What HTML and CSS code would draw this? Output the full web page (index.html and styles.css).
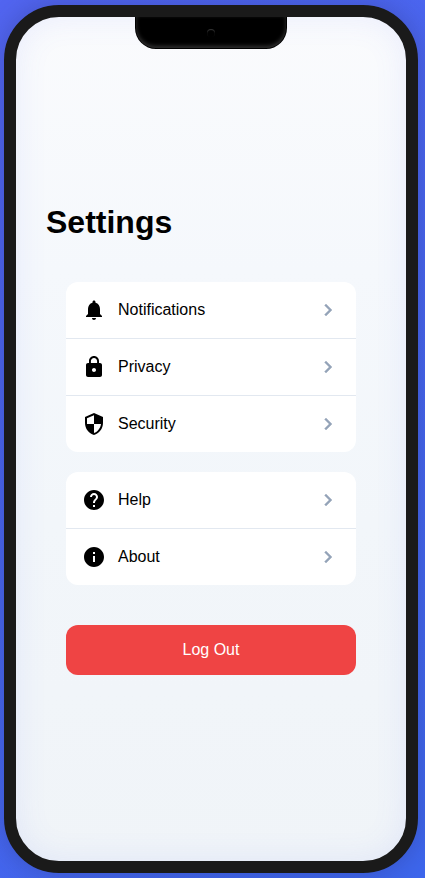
FILE: index.html
```html
<!DOCTYPE html>
<html lang="en">
<head>
<meta charset="utf-8">
<title>Settings</title>
<link rel="stylesheet" href="styles.css">
</head>
<body>
<div class="phone">
  <div class="notch"><span class="camera"></span></div>
  <main class="screen">
    <h1>Settings</h1>
    <section class="group">
      <div class="row">
        <svg class="icon" viewBox="0 0 24 24"><path d="M12 22c1.1 0 2-.9 2-2h-4c0 1.1.89 2 2 2zm6-6v-5c0-3.07-1.64-5.64-4.5-6.32V4c0-.83-.67-1.5-1.5-1.5s-1.5.67-1.5 1.5v.68C7.63 5.36 6 7.92 6 11v5l-2 2v1h16v-1l-2-2z"/></svg>
        <span class="label">Notifications</span>
        <svg class="chevron" viewBox="0 0 24 24"><path d="M10 6 8.59 7.41 13.17 12l-4.58 4.59L10 18l6-6z"/></svg>
      </div>
      <div class="row">
        <svg class="icon" viewBox="0 0 24 24"><path d="M18 8h-1V6c0-2.76-2.24-5-5-5S7 3.240 7 6v2H6c-1.100 0-2 .9-2 2v10c0 1.100.9 2 2 2h12c1.100 0 2-.9 2-2V10c0-1.100-.9-2-2-2zm-6 9c-1.100 0-2-.9-2-2s.9-2 2-2 2 .9 2 2-.9 2-2 2zm3.100-9H8.900V6c0-1.710 1.390-3.100 3.100-3.100s3.100 1.390 3.100 3.100v2z"/></svg>
        <span class="label">Privacy</span>
        <svg class="chevron" viewBox="0 0 24 24"><path d="M10 6 8.59 7.41 13.17 12l-4.58 4.59L10 18l6-6z"/></svg>
      </div>
      <div class="row">
        <svg class="icon" viewBox="0 0 24 24"><path d="M12 1 3 5v6c0 5.550 3.840 10.740 9 12 5.160-1.260 9-6.450 9-12V5l-9-4zm0 10.990h7c-.53 4.120-3.280 7.790-7 8.940V12H5V6.300l7-3.110v8.800z"/></svg>
        <span class="label">Security</span>
        <svg class="chevron" viewBox="0 0 24 24"><path d="M10 6 8.59 7.41 13.17 12l-4.58 4.59L10 18l6-6z"/></svg>
      </div>
    </section>
    <section class="group">
      <div class="row">
        <svg class="icon" viewBox="0 0 24 24"><path d="M12 2C6.480 2 2 6.480 2 12s4.480 10 10 10 10-4.480 10-10S17.520 2 12 2zm1 17h-2v-2h2v2zm2.070-7.750-.9.920C13.450 12.900 13 13.500 13 15h-2v-.5c0-1.100.45-2.100 1.170-2.830l1.240-1.260c.37-.36.590-.86.590-1.410 0-1.100-.9-2-2-2s-2 .9-2 2H8c0-2.210 1.790-4 4-4s4 1.790 4 4c0 .88-.36 1.680-.93 2.250z"/></svg>
        <span class="label">Help</span>
        <svg class="chevron" viewBox="0 0 24 24"><path d="M10 6 8.59 7.41 13.17 12l-4.58 4.59L10 18l6-6z"/></svg>
      </div>
      <div class="row">
        <svg class="icon" viewBox="0 0 24 24"><path d="M12 2C6.480 2 2 6.480 2 12s4.480 10 10 10 10-4.480 10-10S17.520 2 12 2zm1 15h-2v-6h2v6zm0-8h-2V7h2v2z"/></svg>
        <span class="label">About</span>
        <svg class="chevron" viewBox="0 0 24 24"><path d="M10 6 8.59 7.41 13.17 12l-4.58 4.59L10 18l6-6z"/></svg>
      </div>
    </section>
    <button class="logout">Log Out</button>
  </main>
</div>
</body>
</html>
```
FILE: styles.css
```css
* { box-sizing: border-box; }
body {
  margin: 0;
  height: 878px;
  padding: 5px 7px 5px 4px;
  overflow: hidden;
  font-family: "Liberation Sans", Arial, sans-serif;
  background: linear-gradient(135deg, #5265f0, #3d66ec);
}
.phone {
  position: relative;
  width: 414px;
  height: 868px;
  border: 12px solid #1a1a1a;
  border-radius: 55px;
  background: linear-gradient(180deg, #fafbfd, #f5f8fc 30%, #f2f6fa 60%, #f0f4f8);
  box-shadow: 0 0 24px 2px rgba(40, 50, 120, .32);
}
.notch {
  position: absolute;
  z-index: 1;
  top: 0;
  left: 50%;
  width: 150px;
  height: 31px;
  margin-left: -75px;
  border-radius: 0 0 20px 20px;
  background: #000;
  box-shadow: 0 0 0 1px #000, inset 0 -2px 4px rgba(255, 255, 255, .2);
  clip-path: inset(0 -1px -1px -1px);
}
.camera {
  position: absolute;
  top: 12px;
  left: 71px;
  width: 8px;
  height: 8px;
  border-radius: 50%;
  box-shadow: inset 0 1px 1px rgba(255, 255, 255, .22);
}
.screen {
  display: flex;
  flex-direction: column;
  height: 844px;
  padding: 187px 50px 0;
  border-radius: 43px;
  box-shadow: inset 0 0 32px rgba(90, 105, 245, .1);
}
h1 {
  margin: 0 0 41px -20px;
  font-size: 32px;
  line-height: 37px;
}
.group {
  margin-bottom: 20px;
  border-radius: 12px;
  background: #fff;
}
.row {
  display: flex;
  align-items: center;
  height: 56px;
  padding: 0 16px;
}
.row + .row {
  height: 57px;
  border-top: 1px solid #e2e8f0;
}
.icon { width: 24px; height: 24px; }
.label {
  flex: 1;
  margin-left: 12px;
  font-size: 16px;
  line-height: 18px;
}
.chevron {
  width: 24px;
  height: 24px;
  fill: #94a3b8;
  stroke: #94a3b8;
  stroke-width: .4;
}
.logout {
  height: 50px;
  margin-top: 20px;
  border: 0;
  border-radius: 12px;
  background: #ef4444;
  color: #fff;
  font: 16px "Liberation Sans", Arial, sans-serif;
}
```
